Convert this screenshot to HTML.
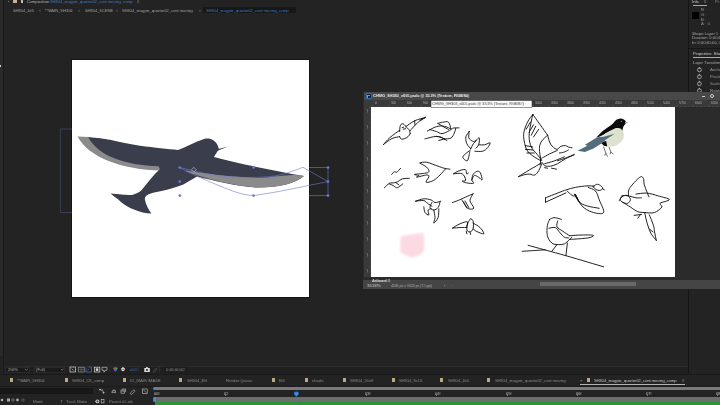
<!DOCTYPE html>
<html><head><meta charset="utf-8">
<style>
*{margin:0;padding:0;box-sizing:border-box}
html,body{width:720px;height:405px;overflow:hidden;background:#232323;font-family:"Liberation Sans",sans-serif;color:#a2a2a2}
.a{position:absolute}
.t{position:absolute;white-space:nowrap;font-size:4.4px;line-height:4px;transform:scaleX(0.91);transform-origin:0 0;will-change:transform}
.sq{position:absolute;width:3.6px;height:4px;background:#bba985}
</style></head><body><div id="wrap" style="position:absolute;left:0;top:0;width:720px;height:405px;overflow:hidden;background:#232323;filter:blur(0.3px)">
<!-- left strip -->
<div class="a" style="left:0;top:0;width:3px;height:356px;background:#2a2a2a"></div>
<div class="a" style="left:3px;top:0;width:1px;height:373px;background:#1a1a1a"></div>

<!-- top header -->
<div class="t" style="left:27px;top:-0.3px;color:#b5b5b5">Composition</div>
<div class="t" style="left:50px;top:-0.3px;color:#3c7ccc">SH304_magpie_quarter02_cont moving_comp</div>
<div class="a" style="left:13px;top:0;width:3.5px;height:2.5px;background:#c9b48a"></div>
<div class="a" style="left:20.5px;top:0;width:2px;height:2.5px;background:#bbb"></div><div class="a" style="left:7.5px;top:0.5px;width:1.5px;height:1.5px;background:#777"></div>
<div class="t" style="left:137px;top:-0.3px;color:#aaa">≡</div>

<!-- breadcrumbs -->
<div class="t" style="left:13px;top:8.7px">SH304_4x5</div>
<div class="t" style="left:38.5px;top:9px;font-size:3.6px;color:#8a8a8a">&lt;</div>
<div class="t" style="left:45px;top:8.7px">**MAIN_SH304</div>
<div class="t" style="left:77.5px;top:9px;font-size:3.6px;color:#8a8a8a">&lt;</div>
<div class="t" style="left:84.5px;top:8.7px">SH304_SCENE</div>
<div class="t" style="left:115.5px;top:9px;font-size:3.6px;color:#8a8a8a">&lt;</div>
<div class="t" style="left:122px;top:8.7px">SH304_magpie_quarter02_cont moving</div>
<div class="t" style="left:199px;top:9px;font-size:3.6px;color:#8a8a8a">&lt;</div>
<div class="a" style="left:202.5px;top:7px;width:93px;height:6.2px;background:#171717"></div>
<div class="t" style="left:205.5px;top:8.7px;color:#3c7ccc">SH304_magpie_quarter02_cont moving_comp</div>

<div class="a" style="left:0;top:65px;width:1.2px;height:1.6px;background:#d0d0d0"></div>
<!-- comp canvas -->
<div class="a" style="left:71px;top:59px;width:239px;height:239px;background:#151515"></div>
<div class="a" style="left:72px;top:60px;width:237px;height:237px;background:#fff"></div>

<!-- COMP SVG -->
<svg class="a" style="left:0;top:0" width="720" height="405" viewBox="0 0 720 405">
  <path d="M72 129 H60.3 V212.5 H72" fill="none" stroke="#3d4160" stroke-width="0.9"/>
  <!-- grey left wing under -->
  <path d="M77.6 136.5 L89 137 L165 160 L161 170.5 C122 170 88 157 77.6 136.5Z" fill="#8b8b8b"/>
  <!-- grey right wing under -->
  <!-- dark bird -->
  <path d="M88.3 137.2 C98 137.8 104 138.6 110 139.8 C118 141.5 128 144 140 145.8 C155 147.8 168 149 178 150 C186 147 195 142 204 139 C210 137.5 215 140 217.5 145 L219 149 C217 152 215 155 214 157 C240 164 275 171 304 176 C296 183 280 187.5 257.5 187.5 C235 186 215 181 197 176.5 C192 179.5 187 182.5 183.3 184.4 C176 187.5 168 189.5 162.5 190.7 C156 192 151 193 148.6 194.2 C145 196 144.5 198 145.1 200.4 C146 205 149 210 151.4 213.6 C140 213 128 208 121 202 C117 198 113 196 110.5 193.5 C120 194 128 195.5 132 194.9 C136 194 139 192.5 141.7 190 C147 184 153 175 160 169 L158.6 166.3 C125 165 98 156 88.3 137.2Z" fill="#3a3e4c"/>
  <path d="M186 170.6 C200 173 230 177 257.5 178 C275 177.5 290 173 304 176 C296 183 280 187.5 257.5 187.5 C235 186 210 180 186 171.5Z" fill="#8b8b8b"/>
  <path d="M217 151 L228 146.5 L218.5 149Z" fill="#3a3e4c"/>
  <!-- path overlay -->
  <g fill="none" stroke="#6f78d0" stroke-width="0.6">
    <path d="M179.8 167.5 C190 170 205 174 220 176 C240 178 260 178 275 176 C290 173 298 169 303 167.3 L328 181.6"/>
    <path d="M179.8 167.5 C188 172 200 178 220 186 C232 191 242 195 253.5 195.6 C280 192 305 186 328 181.6"/>
    <path d="M309 167.5 H328 V195.6 H309"/>
  </g>
  <g fill="#6f78d0">
    <circle cx="179.8" cy="167.5" r="1.35"/><circle cx="179.8" cy="181.6" r="1.35"/><circle cx="179.8" cy="195.6" r="1.35"/>
    <circle cx="253.5" cy="167.5" r="1.35"/><circle cx="253.5" cy="195.6" r="1.35"/>
    <circle cx="328" cy="167.5" r="1.35"/><circle cx="328" cy="181.6" r="1.35"/><circle cx="328" cy="195.6" r="1.35"/>
  </g>
  <path d="M193.8 167.3 L196.2 169.7 L193.8 172.1 L191.4 169.7Z" fill="none" stroke="#c8cce8" stroke-width="0.6"/>
</svg>

<!-- right panel -->
<div class="a" style="left:688px;top:0;width:1px;height:374px;background:#151515"></div>
<div class="a" style="left:4px;top:366px;width:684px;height:8px;background:#202020"></div><div class="a" style="left:4px;top:365.6px;width:684px;height:0.8px;background:#2b2b2b"></div>
<div class="t" style="left:692px;top:-0.5px;color:#cfcfcf">Info</div>
<div class="t" style="left:704px;top:-0.5px;color:#bbb">≡</div>
<div class="a" style="left:692.5px;top:4.5px;width:14px;height:0.8px;background:#aaa"></div>
<div class="t" style="left:715px;top:-0.5px;color:#888">Pr</div>
<div class="a" style="left:692px;top:12px;width:7px;height:7px;background:#000"></div>
<div class="t" style="left:701px;top:7.5px;color:#999">R :</div>
<div class="t" style="left:701px;top:12.5px;color:#999">G :</div>
<div class="t" style="left:701px;top:17.5px;color:#999">B :</div>
<div class="t" style="left:701px;top:22px;color:#999">A :&nbsp; 0</div>
<div class="t" style="left:691.5px;top:31.5px;color:#aaa">Shape Layer 1</div>
<div class="t" style="left:691.5px;top:36.2px;color:#aaa">Duration: 0;00;0</div>
<div class="t" style="left:691.5px;top:41px;color:#aaa">In: 0;00;00;00, O</div>
<div class="a" style="left:689px;top:47.5px;width:31px;height:1.5px;background:#181818"></div>
<div class="t" style="left:693px;top:51.5px;color:#cfcfcf">Properties: Shape</div>
<div class="a" style="left:692.5px;top:57px;width:28px;height:0.8px;background:#aaa"></div>
<div class="t" style="left:693px;top:60.5px;color:#aaa">Layer Transform</div>
<svg class="a" style="left:0;top:0" width="720" height="405" viewBox="0 0 720 405">
 <g fill="none" stroke="#d0d0d0" stroke-width="0.7">
  <circle cx="699.4" cy="69.9" r="1.9"/><circle cx="699.4" cy="76.8" r="1.9"/><circle cx="699.4" cy="83.8" r="1.9"/><circle cx="699.4" cy="90.7" r="1.9"/>
  <path d="M699.4 67V68.5M699.4 73.9V75.4M699.4 80.9V82.4M699.4 87.8V89.3"/>
 </g>
</svg>
<div class="t" style="left:710px;top:67.5px;color:#999">Anchor</div>
<div class="t" style="left:710px;top:74.5px;color:#999">Position</div>
<div class="t" style="left:710px;top:81.5px;color:#999">Scale</div>
<div class="t" style="left:710px;top:88.5px;color:#999">Rotation</div>

<!-- PS window -->
<div class="a" style="left:363px;top:92px;width:357px;height:197px;background:#2b2b2b"></div>
<div class="a" style="left:364px;top:92px;width:356px;height:8px;background:#484848"></div>
<div class="a" style="left:364px;top:100px;width:356px;height:7px;background:#3a3a3a"></div>
<div class="a" style="left:364px;top:107px;width:7px;height:170px;background:#3a3a3a"></div>
<div class="a" style="left:371px;top:107px;width:304px;height:170px;background:#fff"></div>
<div class="a" style="left:363px;top:280px;width:357px;height:9px;background:#454545"></div>
<div class="a" style="left:540px;top:281.5px;width:96px;height:4.5px;background:#6a6a6a"></div>
<div class="a" style="left:366px;top:93px;width:5.6px;height:6px;background:#0b2442;border:0.6px solid #2d6fb8;border-radius:1px"></div><div class="a" style="left:367.3px;top:94.6px;width:2.4px;height:3px;border-left:0.6px solid #4fa0f0;border-top:0.6px solid #4fa0f0"></div>
<div class="t" style="left:372.5px;top:94.2px;color:#f4f4f4;font-weight:bold;font-size:4.2px">CHWG_SH303_v001.psdc @ 33.3% (Texture, RGB/8#)</div>
<div class="a" style="left:702px;top:95.5px;width:3px;height:1px;background:#ccc"></div>
<div class="a" style="left:710px;top:94px;width:4px;height:4px;border:0.8px solid #ccc;border-radius:2px"></div>

<div class="t" style="left:374.5px;top:102px;font-size:3.4px;line-height:3px;color:#b0b0b0">0</div><div class="t" style="left:390.5px;top:102px;font-size:3.4px;line-height:3px;color:#b0b0b0">300</div><div class="t" style="left:406.5px;top:102px;font-size:3.4px;line-height:3px;color:#b0b0b0">600</div><div class="t" style="left:422.5px;top:102px;font-size:3.4px;line-height:3px;color:#b0b0b0">900</div><div class="t" style="left:438.5px;top:102px;font-size:3.4px;line-height:3px;color:#b0b0b0">1200</div><div class="t" style="left:454.5px;top:102px;font-size:3.4px;line-height:3px;color:#b0b0b0">1500</div><div class="t" style="left:470.5px;top:102px;font-size:3.4px;line-height:3px;color:#b0b0b0">1800</div><div class="t" style="left:486.5px;top:102px;font-size:3.4px;line-height:3px;color:#b0b0b0">2100</div><div class="t" style="left:502.5px;top:102px;font-size:3.4px;line-height:3px;color:#b0b0b0">2400</div><div class="t" style="left:518.5px;top:102px;font-size:3.4px;line-height:3px;color:#b0b0b0">2700</div><div class="t" style="left:534.5px;top:102px;font-size:3.4px;line-height:3px;color:#b0b0b0">3000</div><div class="t" style="left:550.5px;top:102px;font-size:3.4px;line-height:3px;color:#b0b0b0">3300</div><div class="t" style="left:566.5px;top:102px;font-size:3.4px;line-height:3px;color:#b0b0b0">3600</div><div class="t" style="left:582.5px;top:102px;font-size:3.4px;line-height:3px;color:#b0b0b0">3900</div><div class="t" style="left:598.5px;top:102px;font-size:3.4px;line-height:3px;color:#b0b0b0">4200</div><div class="t" style="left:614.5px;top:102px;font-size:3.4px;line-height:3px;color:#b0b0b0">4500</div><div class="t" style="left:630.5px;top:102px;font-size:3.4px;line-height:3px;color:#b0b0b0">4800</div><div class="t" style="left:646.5px;top:102px;font-size:3.4px;line-height:3px;color:#b0b0b0">5100</div><div class="t" style="left:662.5px;top:102px;font-size:3.4px;line-height:3px;color:#b0b0b0">5400</div><div class="t" style="left:678.5px;top:102px;font-size:3.4px;line-height:3px;color:#b0b0b0">5700</div><div class="t" style="left:694.5px;top:102px;font-size:3.4px;line-height:3px;color:#b0b0b0">6000</div><div class="t" style="left:710.5px;top:102px;font-size:3.4px;line-height:3px;color:#b0b0b0">6300</div>
<svg class="a" style="left:0;top:0" width="720" height="405" viewBox="0 0 720 405">
<path d="M373 105V107M377 106V107M381 106V107M385 106V107M389 105V107M393 106V107M397 106V107M401 106V107M405 105V107M409 106V107M413 106V107M417 106V107M421 105V107M425 106V107M429 106V107M433 106V107M437 105V107M441 106V107M445 106V107M449 106V107M453 105V107M457 106V107M461 106V107M465 106V107M469 105V107M473 106V107M477 106V107M481 106V107M485 105V107M489 106V107M493 106V107M497 106V107M501 105V107M505 106V107M509 106V107M513 106V107M517 105V107M521 106V107M525 106V107M529 106V107M533 105V107M537 106V107M541 106V107M545 106V107M549 105V107M553 106V107M557 106V107M561 106V107M565 105V107M569 106V107M573 106V107M577 106V107M581 105V107M585 106V107M589 106V107M593 106V107M597 105V107M601 106V107M605 106V107M609 106V107M613 105V107M617 106V107M621 106V107M625 106V107M629 105V107M633 106V107M637 106V107M641 106V107M645 105V107M649 106V107M653 106V107M657 106V107M661 105V107M665 106V107M669 106V107M673 106V107M677 105V107M681 106V107M685 106V107M689 106V107M693 105V107M697 106V107M701 106V107M705 106V107M709 105V107M713 106V107M717 106V107" stroke="#777" stroke-width="0.4"/>
<path d="M367.5 109.0V112.5M367.5 125.0V128.5M367.5 141.0V144.5M367.5 157.0V160.5M367.5 173.0V176.5M367.5 189.0V192.5M367.5 205.0V208.5M367.5 221.0V224.5M367.5 237.0V240.5M367.5 253.0V256.5M367.5 269.0V272.5" stroke="#707070" stroke-width="0.8"/><path d="M369.0 107H371M370.0 111H371M370.0 115H371M370.0 119H371M369.0 123H371M370.0 127H371M370.0 131H371M370.0 135H371M369.0 139H371M370.0 143H371M370.0 147H371M370.0 151H371M369.0 155H371M370.0 159H371M370.0 163H371M370.0 167H371M369.0 171H371M370.0 175H371M370.0 179H371M370.0 183H371M369.0 187H371M370.0 191H371M370.0 195H371M370.0 199H371M369.0 203H371M370.0 207H371M370.0 211H371M370.0 215H371M369.0 219H371M370.0 223H371M370.0 227H371M370.0 231H371M369.0 235H371M370.0 239H371M370.0 243H371M370.0 247H371M369.0 251H371M370.0 255H371M370.0 259H371M370.0 263H371M369.0 267H371M370.0 271H371M370.0 275H371" stroke="#666" stroke-width="0.4"/>
<defs><filter id="pb" x="-20%" y="-20%" width="140%" height="140%"><feGaussianBlur stdDeviation="1"/></filter><clipPath id="pc"><rect x="371" y="107" width="304" height="170"/></clipPath></defs>
<g clip-path="url(#pc)">
<path d="M400.4 236.4 C405 235 415 233.5 423.6 232.9 C424.5 240 424.5 246 424 250.7 C422 253 420 254.5 419.6 255.1 C416 256.5 414 257.5 411.7 257.6 C408 256.8 406 255.5 404.8 254.6 L400.4 252.7Z" fill="#fcdae3" filter="url(#pb)"/>
<g fill="none" stroke="#0a0a0a" stroke-linecap="round" stroke-linejoin="round">
<path d="M383.5 144.5C384.5 143.4 387.2 140.0 389.9 137.6C392.6 135.2 398.1 131.4 399.7 130.2M383.5 144.5C384.9 143.5 389.1 139.9 391.8 138.6C394.6 137.3 398.4 137.0 399.7 136.6M399.7 131.7C399.8 130.9 399.8 128.0 400.0 126.8C400.3 125.5 400.7 124.8 401.2 124.3C401.8 123.8 402.5 123.5 403.2 123.8C403.9 124.0 404.4 125.0 405.2 125.8C405.9 126.5 406.9 127.4 407.6 128.2C408.4 129.1 409.2 129.8 409.6 130.7C410.0 131.6 410.0 133.2 410.1 133.7M405.7 126.8C407.1 125.8 411.3 122.4 414.6 120.8C417.8 119.3 423.6 118.0 425.4 117.4M425.4 117.4C424.1 118.3 420.1 120.6 417.5 122.8C415.0 125.0 411.3 129.4 410.1 130.7M399.7 136.6C400.0 137.0 400.4 138.8 401.2 139.1C402.0 139.4 403.5 139.0 404.7 138.6C405.8 138.2 407.2 137.5 408.1 136.6C409.0 135.8 409.8 134.2 410.1 133.7M402.2 127.7L403.7 127.2M414.6 120.8L415.0 124.8M403.2 129.2L405.7 128.7" stroke-width="0.9"/>
<path d="M427.3 131.1C428.8 130.4 433.4 127.5 436.3 126.7C439.1 125.8 442.0 125.8 444.4 126.3C446.9 126.7 449.9 128.6 450.9 129.1M437.9 123.4C438.7 123.2 441.0 122.4 442.8 122.2C444.6 122.0 447.1 121.0 448.5 122.2C449.9 123.3 450.5 127.9 450.9 129.1M437.9 123.4C438.5 123.7 439.4 124.4 441.2 125.4C442.9 126.5 447.3 128.8 448.5 129.5M429.8 129.5C430.9 129.8 434.3 130.9 436.3 131.5C438.3 132.2 439.8 133.7 442.0 133.6C444.2 133.4 447.6 131.6 449.3 130.7C451.1 129.8 451.5 128.8 452.6 128.3C453.7 127.8 454.7 127.9 455.8 127.9C456.9 127.8 458.5 127.9 459.1 127.9M455.8 128.3C455.6 129.1 455.0 131.5 454.2 133.2C453.4 134.8 452.6 137.1 450.9 138.1C449.3 139.0 445.5 138.7 444.4 138.9M424.9 138.9C426.8 138.5 433.0 136.4 436.3 136.4C439.5 136.4 443.1 138.5 444.4 138.9M436.3 136.4C437.1 136.6 439.4 136.6 441.2 137.2C442.9 137.9 445.9 140.0 446.9 140.5M438.7 140.5L444.4 138.9M420.0 120.1L424.9 117.7" stroke-width="0.9"/>
<path d="M469.3 131.4C468.8 132.3 466.3 134.8 465.9 136.9C465.5 138.9 466.0 141.8 466.9 143.8C467.7 145.8 470.2 147.9 470.8 148.7M469.3 131.4C469.2 132.5 468.3 136.2 468.8 137.8C469.4 139.5 471.6 140.8 472.8 141.3C473.9 141.8 475.3 140.9 475.8 140.8M475.8 140.8C476.3 140.3 478.7 137.2 479.2 137.8C479.7 138.5 479.3 143.0 478.7 144.8C478.1 146.5 476.2 147.6 475.8 148.2M470.8 148.7C471.2 147.9 472.4 145.1 473.3 143.8C474.2 142.5 475.8 141.3 476.2 140.8M478.7 144.8C479.7 144.8 482.8 145.1 484.6 144.8C486.5 144.4 489.6 142.3 490.1 142.8C490.6 143.3 488.8 146.3 487.6 147.7C486.4 149.1 484.8 150.6 482.7 151.2C480.5 151.8 476.1 151.2 474.8 151.2M470.8 149.7C469.5 150.9 463.5 154.8 462.9 156.6C462.3 158.4 466.2 161.4 467.4 160.6C468.5 159.7 469.4 153.2 469.8 151.7" stroke-width="0.9"/>
<path d="M391.7 174.4C392.1 174.0 393.6 172.0 394.4 171.7C395.3 171.3 395.6 172.8 396.7 172.2C397.7 171.7 399.9 169.0 400.6 168.3M384.4 187.8C385.3 187.0 387.8 184.2 389.4 183.3C391.1 182.5 393.1 183.1 394.4 182.8C395.8 182.5 396.5 182.3 397.8 181.7C399.1 181.0 400.3 179.4 402.2 178.9C404.2 178.3 408.2 178.4 409.4 178.3M389.4 183.9C390.1 184.2 392.1 184.9 393.3 185.6C394.5 186.2 395.6 187.7 396.7 187.8C397.8 187.9 399.0 186.8 400.0 186.1C401.0 185.5 402.3 184.3 402.8 183.9M396.1 182.8L398.9 185.0M420.0 162.8C421.1 162.7 423.7 161.7 426.7 162.2C429.6 162.8 434.8 165.1 437.8 166.1C440.7 167.1 442.4 167.8 444.4 168.3C446.5 168.9 449.1 169.1 450.0 169.2M420.0 163.3C421.1 164.0 425.2 165.8 426.7 167.2C428.1 168.6 429.3 170.6 428.9 171.7C428.5 172.7 426.9 172.9 424.4 173.3C422.0 173.8 415.4 174.1 414.4 174.4C413.5 174.8 418.5 175.1 418.9 175.6C419.3 176.0 415.4 177.3 416.7 177.2C418.0 177.1 424.6 175.1 426.7 175.0C428.7 174.9 429.0 175.5 428.9 176.7C428.8 177.9 425.4 181.6 426.1 182.2C426.9 182.9 431.0 181.8 433.3 180.6C435.6 179.4 438.0 176.9 440.0 175.0C442.0 173.1 444.6 169.9 445.6 168.9" stroke-width="0.9"/>
<path d="M453.6 173.8C454.4 173.4 456.0 171.9 458.0 171.2C459.9 170.5 463.9 169.1 465.3 169.5C466.7 169.9 466.1 173.2 466.6 173.8C467.1 174.4 468.0 173.1 468.3 173.0M453.6 173.8C455.1 173.8 460.3 172.7 462.3 173.8C464.3 174.9 465.7 179.1 465.7 180.3C465.7 181.5 462.1 180.7 462.3 181.2C462.4 181.6 464.7 182.5 466.6 182.9C468.5 183.2 472.6 183.8 473.5 183.3C474.4 182.8 471.8 181.4 471.8 179.9C471.8 178.3 472.5 175.3 473.5 173.8C474.5 172.4 476.7 171.4 477.8 171.2C479.0 171.1 479.7 171.5 480.4 173.0C481.1 174.4 482.4 179.1 482.1 179.9C481.8 180.6 480.0 178.0 478.7 177.3C477.4 176.6 475.5 175.1 474.4 175.5C473.2 176.0 472.2 179.1 471.8 179.9" stroke-width="0.9"/>
<path d="M415.6 201.2C417.0 200.8 421.1 199.0 423.8 198.8C426.4 198.5 429.4 199.4 431.2 200.0C433.1 200.6 433.4 202.3 435.0 202.5C436.6 202.7 439.7 201.5 440.6 201.2M415.6 201.2C417.0 201.1 421.7 200.2 423.8 200.6C425.8 201.0 426.8 202.8 428.1 203.8C429.5 204.7 431.2 205.8 431.9 206.2M431.9 202.5C431.6 203.3 429.7 206.2 430.0 207.5C430.3 208.8 432.4 210.0 433.8 210.0C435.1 210.0 437.1 208.9 438.1 207.5C439.2 206.1 439.7 202.8 440.0 201.9M423.8 206.9C424.0 207.8 424.2 211.1 425.0 212.5C425.8 213.9 428.2 215.4 428.8 215.0C429.3 214.6 427.7 211.0 428.1 210.0C428.5 209.0 430.7 209.0 431.2 208.8M433.8 210.0C434.0 211.2 435.0 215.3 435.0 217.5C435.0 219.7 433.2 223.1 433.8 223.1C434.3 223.1 437.3 219.9 438.1 217.5C439.0 215.1 438.6 210.2 438.8 208.8M452.5 202.5C453.5 202.1 456.2 201.3 458.8 200.2C461.2 199.2 465.1 197.3 467.5 196.2C469.9 195.2 472.2 194.2 473.1 193.8M473.1 193.8C472.6 194.9 469.9 198.2 470.0 200.6C470.1 203.0 474.0 206.8 473.8 208.1C473.5 209.5 470.2 209.3 468.8 208.8C467.3 208.2 466.1 206.5 465.0 205.0C463.9 203.5 462.4 200.6 461.9 199.8M463.5 201.9L466.9 208.1M465.0 201.0L468.8 207.5M452.5 228.1C453.8 227.4 457.5 224.8 460.0 223.8C462.5 222.7 466.5 221.2 467.5 221.9C468.5 222.5 466.5 226.6 466.2 227.5M452.5 228.1C454.0 228.0 458.9 227.6 461.2 227.5C463.6 227.4 465.9 227.5 466.9 227.5M467.5 223.8C467.7 223.3 468.2 222.1 468.8 221.2C469.3 220.4 469.9 218.8 470.6 218.8C471.4 218.8 472.7 219.6 473.1 221.2C473.5 222.9 473.6 227.0 473.1 228.8C472.6 230.5 471.0 231.7 470.0 231.9C469.0 232.1 467.3 231.4 466.9 230.0C466.5 228.6 467.4 224.8 467.5 223.8M473.1 223.1C474.3 223.9 478.2 225.7 480.0 227.5C481.8 229.3 484.4 233.1 483.8 233.8C483.1 234.4 478.0 232.1 476.2 231.2C474.5 230.4 473.6 229.2 473.1 228.8M466.2 231.2L466.9 233.8M470.0 231.9L470.6 234.4" stroke-width="0.9"/>
<path d="M532.8 114.4C531.9 115.7 529.1 118.9 527.6 121.9C526.1 124.9 524.5 129.0 523.9 132.2C523.3 135.4 523.7 138.1 524.2 141.1C524.7 144.1 525.5 147.5 526.9 150.0C528.3 152.5 530.6 154.2 532.8 155.9C535.0 157.6 539.0 159.7 540.2 160.4M532.8 114.4C532.4 116.1 531.2 121.1 530.6 124.8C530.0 128.5 529.0 133.0 529.1 136.7C529.2 140.4 529.9 144.1 531.3 147.0C532.6 149.9 535.5 152.2 537.2 154.4C538.9 156.6 541.0 159.4 541.7 160.4M532.8 114.4C534.0 116.1 537.7 121.3 540.2 124.8C542.7 128.3 546.4 133.5 547.6 135.2M547.6 135.2C546.6 136.2 543.1 138.9 541.7 141.1C540.3 143.3 539.5 145.3 539.4 148.5C539.3 151.7 540.6 158.4 540.9 160.4M530.6 121.9L526.1 129.3M533.5 124.8L529.1 132.2M535.7 126.3L531.3 135.2M538.7 129.3L533.5 137.0M525.4 145.6L532.8 147.0M525.4 149.3L532.8 150.0M526.9 153.0L534.3 153.0M547.6 135.2C548.1 136.7 549.1 141.8 550.6 144.1C552.1 146.4 554.8 148.9 556.5 149.3C558.2 149.7 559.4 146.9 560.9 146.3C562.4 145.7 564.2 145.5 565.4 145.6C566.6 145.7 567.2 146.6 568.3 147.0C569.4 147.4 571.4 147.7 572.0 147.8M568.3 150.0C567.6 150.4 565.4 151.7 563.9 152.2C562.4 152.7 560.1 152.9 559.4 153.0M541.7 162.8C539.7 164.0 533.7 167.4 529.8 169.7C525.9 172.0 520.4 175.4 518.5 176.6M518.5 176.6C519.6 176.3 523.0 175.0 524.9 174.6C526.8 174.2 528.2 174.0 529.8 174.1C531.4 174.2 533.2 175.7 534.7 175.1C536.2 174.5 537.5 172.6 538.7 170.7C539.9 168.8 541.2 165.0 541.7 163.8M542.6 157.8C543.8 157.2 547.1 155.1 549.6 153.9C552.1 152.7 556.1 151.0 557.4 150.4M542.6 162.8C542.9 163.3 543.3 165.1 544.6 165.7C545.9 166.3 548.4 166.5 550.5 166.2C552.6 165.9 554.9 165.0 557.4 163.8C559.9 162.6 562.5 160.3 565.3 158.8C568.1 157.3 572.7 155.6 574.2 154.9M557.4 160.8C558.9 160.3 563.5 158.9 566.3 157.8C569.1 156.7 572.9 155.0 574.2 154.4M544.6 163.8C546.2 163.3 551.2 162.0 554.5 160.8C557.8 159.6 562.8 157.5 564.4 156.8M544.6 167.7L547.6 168.2M551.5 168.2L556.5 169.2M541.0 158.0L540.0 165.0" stroke-width="0.9"/>
<path d="M545.5 197.8C548.7 196.6 559.6 192.2 564.6 190.4C569.7 188.7 572.0 188.1 575.7 187.3C579.4 186.6 583.8 186.1 586.9 185.9C589.9 185.7 593.0 186.1 594.3 186.1M545.5 202.2L565.9 192.9M545.5 197.8L545.5 202.2M593.0 186.7C593.6 186.3 595.5 184.5 596.7 184.3C598.0 184.1 599.4 184.8 600.4 185.5C601.4 186.2 602.8 187.5 602.7 188.3C602.6 189.2 600.9 190.2 599.8 190.4C598.7 190.6 597.2 190.2 596.1 189.6C595.0 189.0 593.5 187.2 593.0 186.7M602.3 188.6L604.4 189.8M574.8 194.5C575.2 195.4 576.6 198.3 577.6 199.7C578.5 201.1 580.0 202.6 580.4 203.1M575.2 194.3L578.0 199.4M588.1 187.3C589.3 188.0 593.6 189.0 595.5 191.0C597.3 193.1 597.9 196.1 599.2 199.7C600.5 203.3 604.8 210.6 603.5 212.7C602.3 214.7 595.4 213.2 591.8 212.0C588.2 210.9 584.6 208.7 581.9 205.9C579.2 203.0 576.8 196.6 575.7 194.8M574.5 194.1C575.3 195.5 577.4 200.2 579.4 202.2C581.5 204.1 583.6 204.8 586.9 205.9C590.1 206.9 597.1 207.9 599.2 208.3M567.1 191.0C567.9 191.8 570.8 194.5 572.0 195.4C573.3 196.2 574.1 195.9 574.5 196.0" stroke-width="0.9"/>
<path d="M549.6 219.4C550.3 219.1 552.4 217.8 554.0 217.7C555.6 217.5 558.0 218.4 559.2 218.7C560.5 219.0 561.1 219.3 561.4 219.4M549.6 219.4C549.2 220.4 547.8 222.6 547.4 225.4C547.0 228.1 546.6 232.8 547.4 235.7C548.1 238.7 550.0 241.6 551.8 243.1C553.7 244.6 556.4 244.5 558.5 244.6C560.6 244.7 562.7 244.6 564.4 243.9C566.1 243.1 567.6 241.3 568.8 240.2C570.1 239.1 571.3 237.7 571.8 237.2M557.7 220.9C557.6 221.9 556.1 225.1 557.0 226.8C557.9 228.6 560.8 229.8 562.9 231.3C565.0 232.8 568.5 235.0 569.6 235.7M548.9 228.3C550.0 228.2 553.7 226.8 555.5 227.6C557.4 228.3 558.5 231.2 560.0 232.8C561.4 234.4 562.9 236.3 564.4 237.2C565.9 238.1 568.1 237.8 568.8 237.9M569.6 235.7C571.7 235.6 578.2 235.0 582.2 235.0C586.1 234.9 592.3 234.9 593.3 235.4C594.3 235.9 591.9 237.3 588.1 237.9C584.3 238.6 573.3 239.2 570.3 239.4M557.0 244.6L551.8 251.3M567.4 243.1L565.9 255.7M528.1 245.3C534.4 247.1 553.3 252.1 565.9 255.7C578.5 259.3 597.3 265.0 603.6 266.8M522.2 251.3C524.3 251.1 531.0 250.8 534.8 250.5C538.6 250.3 543.4 249.9 545.2 249.8" stroke-width="0.9"/>
<path d="M628.5 195.9C628.7 194.7 627.6 191.6 629.4 188.5C631.3 185.4 637.3 179.1 639.6 177.4C641.9 175.7 642.6 177.1 643.3 178.3C644.1 179.6 643.6 182.5 644.3 184.8C644.9 187.1 646.3 190.2 647.0 192.2C647.8 194.2 648.6 196.1 648.9 196.9M619.3 200.6C619.9 199.8 621.4 196.7 623.0 195.9C624.5 195.2 626.4 195.6 628.5 195.9C630.7 196.2 633.8 197.5 635.9 197.8C638.1 198.1 640.6 197.8 641.5 197.8M635.9 194.1C637.8 193.9 643.3 192.8 647.0 193.1C650.7 193.5 654.4 194.8 658.1 195.9C661.9 197.0 669.0 198.4 669.3 199.6C669.6 200.9 661.2 202.1 660.0 203.3C658.8 204.6 662.8 205.5 661.9 207.0C660.9 208.6 657.2 211.7 654.4 212.6C651.7 213.5 646.7 212.6 645.2 212.6M623.0 202.4C624.2 203.2 627.9 205.5 630.4 207.0C632.8 208.6 635.3 210.7 637.8 211.7C640.2 212.6 644.0 212.4 645.2 212.6M644.8 213.0C645.2 214.6 646.0 219.4 647.0 222.8C648.0 226.1 649.2 230.0 650.7 233.0C652.3 235.9 655.4 239.1 656.3 240.4M656.3 240.4C656.0 238.8 654.9 233.6 654.4 231.1C654.0 228.6 654.4 228.3 653.5 225.6C652.7 222.8 650.0 216.6 649.3 214.8M649.8 229.3L653.0 232.0M622.0 195.9C623.0 195.9 626.2 194.9 627.6 195.6C629.0 196.2 630.4 198.3 630.4 199.6C630.4 200.9 628.8 202.9 627.6 203.3C626.4 203.8 624.2 203.0 623.0 202.4C621.7 201.8 620.3 200.7 620.2 199.6C620.0 198.5 621.7 196.5 622.0 195.9M634.1 215.4L641.5 214.4M637.8 218.1L640.6 214.4" stroke-width="0.9"/>
</g>

<!-- magpie -->
<path d="M596.5 137.2 L602.4 131.3 C606 128.5 610 126 613 123.5 C615 120.5 617.5 118.7 620.5 118.6 C623 118.6 625 119.8 626.1 122 L625.4 123.9 C624 125.2 623 127 622.6 129.2 L622.8 131 C620.5 128.6 618.5 127.9 617.2 127.9 C615 128 613.5 129 612 130.1 C609 131.5 606 133 603.9 134.5 C601 136 598.5 137 596.5 137.5Z" fill="#0a0a0a"/>
<path d="M603.9 134.5 L612 130.1 L617.2 127.9 L620.5 128.6 L622.8 131 L624 134 L623.5 138.4 L621.5 141.5 L618 144.5 L614 146.5 L610 146.7 L607.5 145.5 L606 143 L605.3 139.6 L604.5 137Z" fill="#dde2cf"/>
<circle cx="621.3" cy="121.3" r="0.55" fill="#ddd"/>
<path d="M600.3 142.3 L604.0 145.8 L607.3 146.4 L606.1 140.9Z" fill="#0a0a0a"/>
<path d="M577.5 150.7 L587.3 145.8 L584.9 144.8 L593.5 139.6 L597.2 137.2 L604.6 136.5 L614.8 133.8 L605.9 139.6 L602.2 143.1 L593.5 148.5 L584.9 152.0Z" fill="#546d7e"/>
<path d="M625.0 121.6 L628.3 122.6 L625.0 123.6Z" fill="#7ea4b4"/>
<path d="M603.4 146.4 L605.9 153.2 L607.7 156.7M609.0 146.8 L610.8 152.0 L613.5 154.2M605.9 153.2 L604.6 155.7M610.8 152.0 L610.2 154.4" fill="none" stroke="#111" stroke-width="0.6"/>

</g>
<rect x="431" y="100.5" width="101" height="7" fill="#fafafa" stroke="#333" stroke-width="0.5"/>
</svg>
<div class="t" style="left:432.3px;top:102px;color:#3a3a3a;font-size:4.1px">CHWG_SH303_v001.psdc @ 33.3% (Texture, RGB/8#)</div>
<div class="t" style="left:371.5px;top:278.8px;color:#e0e0e0;font-weight:bold;font-size:3.9px">Artboard 3</div>
<div class="t" style="left:366.5px;top:283.5px;color:#d8d8d8;font-size:4.3px">33.33%</div>
<div class="t" style="left:391px;top:283.7px;color:#aaa;font-size:3.8px">4536 px x 3023 px (72 ppi)</div>
<div class="t" style="left:444px;top:283.5px;color:#aaa;font-size:4px">›</div><div class="t" style="left:451px;top:283.5px;color:#777;font-size:4px">‹</div>

<!-- bottom -->
<!-- comp toolbar -->
<div class="a" style="left:4.5px;top:366.8px;width:25.5px;height:6.2px;background:#1a1a1a;border:0.5px solid #2a2a2a"></div>
<div class="t" style="left:8px;top:367.8px;color:#aaa">200%</div>

<div class="a" style="left:33.5px;top:366.8px;width:31.5px;height:6.2px;background:#1a1a1a;border:0.5px solid #2a2a2a"></div>
<div class="t" style="left:36px;top:367.8px;color:#aaa">(Full)</div>

<svg class="a" style="left:0;top:0" width="720" height="405" viewBox="0 0 720 405">
 <path d="M25 369l1.3 1.2 1.3-1.2M61 369l1.3 1.2 1.3-1.2" fill="none" stroke="#aaa" stroke-width="0.6"/>
 <g fill="none" stroke-width="0.7">
  <rect x="70" y="367" width="5.5" height="5" stroke="#ddd"/>
  <path d="M71.8 368.6 l2 2" stroke="#ddd"/>
  <rect x="78.2" y="367.2" width="6" height="4.8" stroke="#999"/>
  <path d="M78.2 369.6h6M81.2 367.2v4.8" stroke="#999" stroke-width="0.4"/>
  <path d="M86 367.5 v4.5 h5.5 v-5 h-3" stroke="#3b7fd6"/><path d="M87.5 370.5 l2 -2" stroke="#3b7fd6" stroke-width="0.5"/>
  <rect x="94.3" y="367.2" width="5.5" height="4.8" stroke="#ddd"/>
  <rect x="95.8" y="368.4" width="2.5" height="2.4" fill="#ddd" stroke="none"/>
  <path d="M102 367.3h5v3h-2l-1 2v-2h-2z" stroke="#bbb"/>
  <path d="M110 366.5v6M138.5 366.5v6M159.5 366.5v6" stroke="#3a3a3a" stroke-width="0.5"/>
 </g>
 <circle cx="114.5" cy="368.6" r="1.3" fill="#d43"/><circle cx="116.2" cy="368.6" r="1.3" fill="#3a4"/><circle cx="115.3" cy="370.3" r="1.3" fill="#36c"/>
 <path d="M123 367 l2 1.4 -0.8 2.6 h-2.4 l-0.8-2.6z" fill="#ddd"/>
 <circle cx="123" cy="369.3" r="0.6" fill="#222"/>
 <rect x="144.3" y="368" width="5.5" height="4" fill="#ddd"/><rect x="146" y="367.2" width="2" height="1" fill="#ddd"/>
 <circle cx="147" cy="370" r="1" fill="#222"/>
 <path d="M153 372 l3-4 1 1 -3 3.5z" fill="none" stroke="#555" stroke-width="0.6"/>
 <rect x="162.5" y="366.8" width="25" height="5.8" fill="#1d1d1d"/>
</svg>
<div class="t" style="left:129px;top:367.6px;color:#3b7fd6">+0.0</div>
<div class="t" style="left:165.5px;top:367.6px;color:#8f8f8f">0;00;00;02</div>

<div class="a" style="left:0;top:374px;width:720px;height:1px;background:#1a1a1a"></div>
<!-- tabs -->
<div class="sq" style="left:9.5px;top:378.3px"></div><div class="t" style="left:17px;top:379px;color:#8a8a8a">**MAIN_SH304</div><div class="sq" style="left:64.5px;top:378.3px"></div><div class="t" style="left:72px;top:379px;color:#8a8a8a">SH304_CK_comp</div><div class="sq" style="left:122.5px;top:378.3px"></div><div class="t" style="left:130px;top:379px;color:#8a8a8a">01_MAIN IMAGE</div><div class="sq" style="left:178.5px;top:378.3px"></div><div class="t" style="left:187px;top:379px;color:#8a8a8a">SH304_BG</div><div class="t" style="left:226px;top:379px;color:#8a8a8a">Render Queue</div><div class="sq" style="left:271.5px;top:378.3px"></div><div class="t" style="left:279px;top:379px;color:#8a8a8a">BG</div><div class="sq" style="left:304.5px;top:378.3px"></div><div class="t" style="left:312px;top:379px;color:#8a8a8a">clouds</div><div class="sq" style="left:342.5px;top:378.3px"></div><div class="t" style="left:350px;top:379px;color:#8a8a8a">SH304_16x9</div><div class="sq" style="left:391.5px;top:378.3px"></div><div class="t" style="left:399px;top:379px;color:#8a8a8a">SH304_9x16</div><div class="sq" style="left:439.5px;top:378.3px"></div><div class="t" style="left:448px;top:379px;color:#8a8a8a">SH304_4x5</div><div class="sq" style="left:486.5px;top:378.3px"></div><div class="t" style="left:495px;top:379px;color:#8a8a8a">SH304_magpie_quarter02_cont moving</div>
<div class="t" style="left:580px;top:379px;color:#aaa">×</div>
<div class="sq" style="left:586.5px;top:378.3px"></div>
<div class="t" style="left:594px;top:379px;color:#c8c8c8">SH304_magpie_quarter02_cont moving_comp</div>
<div class="t" style="left:682px;top:379px;color:#aaa">≡</div>
<div class="a" style="left:580px;top:384.2px;width:105px;height:0.9px;background:#b0b0b0"></div>
<div class="a" style="left:0;top:385.5px;width:720px;height:1px;background:#1b1b1b"></div>

<!-- timeline panel -->
<div class="a" style="left:0;top:388px;width:93px;height:6px;background:#171717"></div>
<svg class="a" style="left:0;top:0" width="720" height="405" viewBox="0 0 720 405">
 <g fill="none" stroke="#c8c8c8" stroke-width="0.6">
  <path d="M100 389.6 l2.2 0.8 l1.2 1.8 M102.2 390.4 l0.4 -1.2"/>
  <circle cx="100" cy="389.6" r="0.6" fill="#c8c8c8"/><circle cx="103.6" cy="392.6" r="0.6" fill="#c8c8c8"/>
  <path d="M111.8 392.6 a2 2 0 0 1 4 0 z M112.3 390.8 l1.7 -1 1.7 1"/>
  <rect x="121" y="390" width="3.6" height="3.2"/><path d="M122 389 h3.6 v3.2 M121.6 391.2h2.4"/>
  <path d="M130.6 392.8 l2.6 -2.6 a1 1 0 0 1 1.4 1.4 l-2.6 2.6 a1 1 0 0 1 -1.4 -1.4z"/>
  <rect x="142.6" y="389" width="4.6" height="4.4"/><path d="M143.6 390 l2.6 2.6"/>
 </g>
 <g fill="#aaa">
  <circle cx="2" cy="400" r="1.3"/><rect x="7" y="398.5" width="3" height="3"/><circle cx="13" cy="400" r="1.3" fill="none" stroke="#aaa" stroke-width="0.5"/><circle cx="17.5" cy="400" r="1.4"/><circle cx="23" cy="400" r="1.2" fill="none" stroke="#888" stroke-width="0.5"/>
 </g>
 <circle cx="97.4" cy="401.3" r="1.9" fill="#ddd"/><path d="M97.4 400v2.6M96.1 401.3h2.6" stroke="#222" stroke-width="0.6"/>
 <rect x="101.2" y="399.5" width="2.8" height="3.4" fill="none" stroke="#ccc" stroke-width="0.6"/>
</svg>
<div class="t" style="left:33px;top:399.8px;color:#888">Mode</div>
<div class="t" style="left:60px;top:399.8px;color:#888">T</div>
<div class="t" style="left:66px;top:399.8px;color:#888">Track Matte</div>
<div class="t" style="left:108.5px;top:399.8px;color:#888">Parent &amp; Link</div>

<div class="a" style="left:154px;top:387.3px;width:566px;height:2.6px;background:#7a7a7a"></div>
<div class="a" style="left:154px;top:397.2px;width:566px;height:4.6px;background:#6d6d6d"></div>
<div class="a" style="left:155px;top:401.8px;width:565px;height:3.2px;background:#2c9238"></div>
<div class="a" style="left:153px;top:386.6px;width:3px;height:3.4px;background:#3d8ae0;border-radius:1.5px 0 0 1.5px"></div>
<div class="a" style="left:153px;top:396.8px;width:3px;height:5.4px;background:#3d8ae0;border-radius:1.5px 0 0 1.5px"></div>
<div class="t" style="left:154px;top:391.6px;color:#c8c8c8;font-size:4px">00f</div>
<div class="t" style="left:223.5px;top:391.6px;color:#c8c8c8;font-size:4px">02</div><div class="a" style="left:225.0px;top:394.7px;width:0.5px;height:1.5px;background:#777"></div><div class="t" style="left:364.5px;top:391.6px;color:#c8c8c8;font-size:4px">03f</div><div class="a" style="left:366.0px;top:394.7px;width:0.5px;height:1.5px;background:#777"></div><div class="t" style="left:434.5px;top:391.6px;color:#c8c8c8;font-size:4px">04f</div><div class="a" style="left:436.0px;top:394.7px;width:0.5px;height:1.5px;background:#777"></div><div class="t" style="left:505.5px;top:391.6px;color:#c8c8c8;font-size:4px">05f</div><div class="a" style="left:507.0px;top:394.7px;width:0.5px;height:1.5px;background:#777"></div><div class="t" style="left:575.5px;top:391.6px;color:#c8c8c8;font-size:4px">06f</div><div class="a" style="left:577.0px;top:394.7px;width:0.5px;height:1.5px;background:#777"></div><div class="t" style="left:645.5px;top:391.6px;color:#c8c8c8;font-size:4px">07f</div><div class="a" style="left:647.0px;top:394.7px;width:0.5px;height:1.5px;background:#777"></div><div class="t" style="left:715.5px;top:391.6px;color:#c8c8c8;font-size:4px">08f</div><div class="a" style="left:717.0px;top:394.7px;width:0.5px;height:1.5px;background:#777"></div><svg class="a" style="left:0;top:0" width="720" height="405" viewBox="0 0 720 405">
 <path d="M296.4 386 V405" stroke="#4f82bd" stroke-width="0.3" opacity="0.7"/>
 <path d="M294 391.8 h4.8 v2.6 l-2.4 2.4 l-2.4 -2.4z" fill="#3d8ae0" stroke="#10243a" stroke-width="0.4"/>
</svg>
</div></body></html>
